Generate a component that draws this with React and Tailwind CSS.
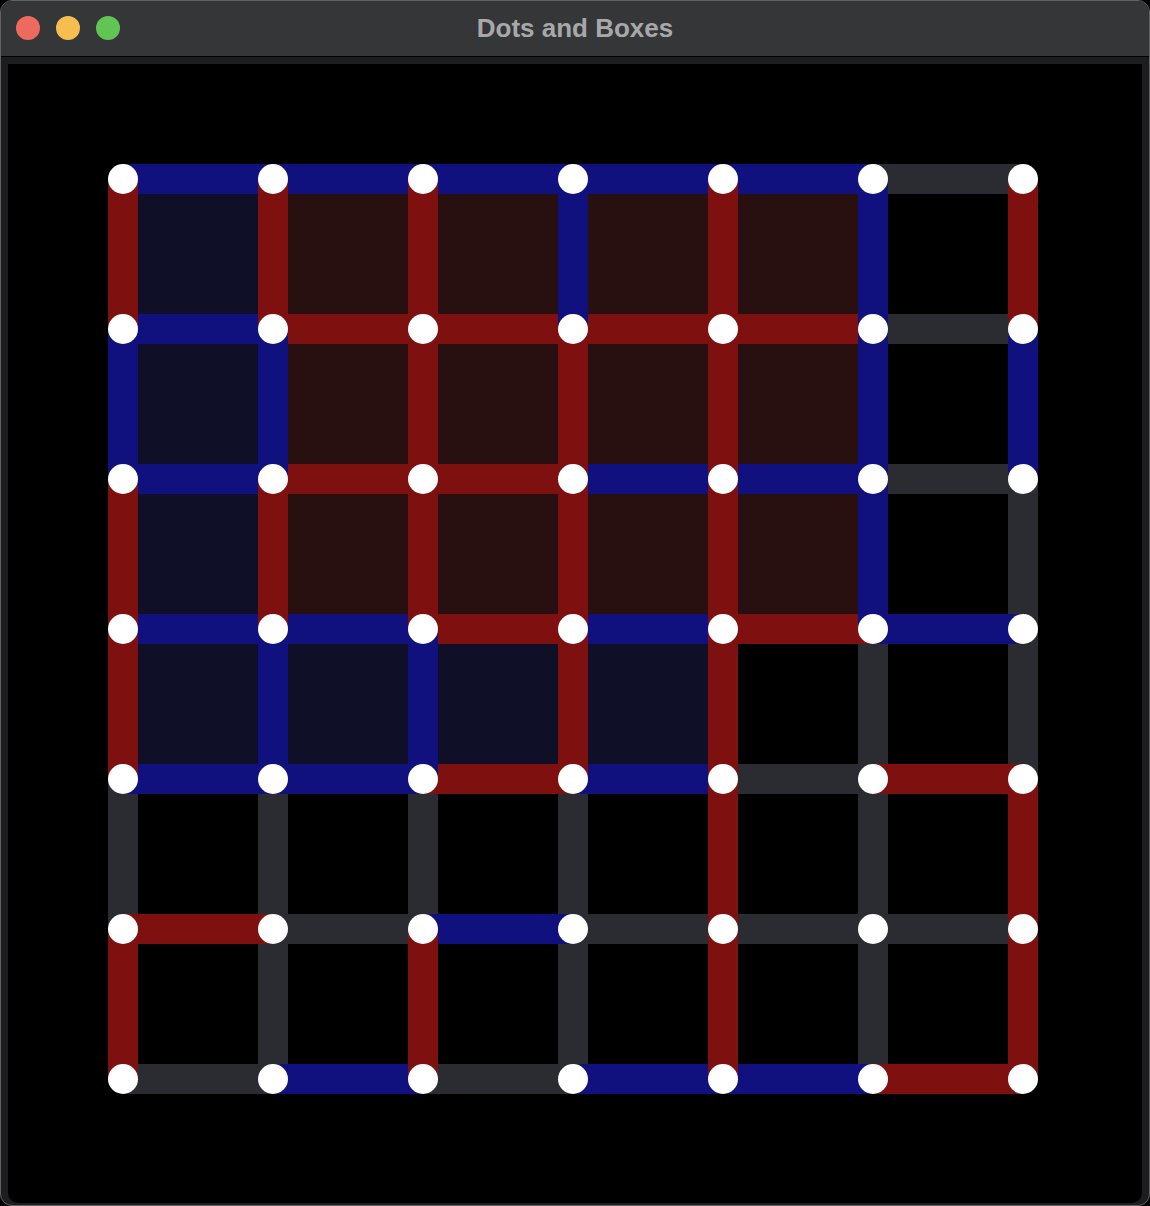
const BLUE = "#10107f";
const RED = "#7f1010";
const GRAY = "#2b2c31";
const BOX_BLUE = "#0f1027";
const BOX_RED = "#291010";

const C = { b: BLUE, r: RED, g: GRAY };

// rows of horizontal segments (7 rows x 6 segments)
const hLines = [
  "bbbbbg",
  "brrrrg",
  "brrbbg",
  "bbrbrb",
  "bbrbgr",
  "rgbggg",
  "gbgbbr",
];

// columns of vertical segments (7 columns x 6 segments)
const vLines = [
  "rbrrgr",
  "rbrbgg",
  "rrrbgr",
  "brrrgg",
  "rrrrrr",
  "bbbggg",
  "rbggrr",
];

// boxes, 6 rows x 6 cols ("." = empty)
const boxes = [
  "brrrr.",
  "brrrr.",
  "brrrr.",
  "bbbb..",
  "......",
  "......",
];

const STEP = 150;
const OFF = 15;
const W = 30;

function Board() {
  const pos = (i) => OFF + i * STEP;
  const all = [];
  hLines.forEach((row, j) =>
    row.split("").forEach((c, i) => all.push({ k: `h${j}${i}`, c, x: pos(i), y: pos(j) - W / 2, w: STEP, h: W }))
  );
  vLines.forEach((col, i) =>
    col.split("").forEach((c, j) => all.push({ k: `v${i}${j}`, c, x: pos(i) - W / 2, y: pos(j), w: W, h: STEP }))
  );
  const grayFirst = [...all.filter((l) => l.c === "g"), ...all.filter((l) => l.c !== "g")];

  return (
    <svg width="930" height="930" viewBox="0 0 930 930" className="block">
      {boxes.map((row, j) =>
        row.split("").map((c, i) =>
          c === "." ? null : (
            <rect key={`b${j}${i}`} x={pos(i)} y={pos(j)} width={STEP} height={STEP} fill={c === "b" ? BOX_BLUE : BOX_RED} />
          )
        )
      )}
      {grayFirst.map((l) => (
        <rect key={l.k} x={l.x} y={l.y} width={l.w} height={l.h} fill={C[l.c]} />
      ))}
      {Array.from({ length: 7 }).map((_, j) =>
        Array.from({ length: 7 }).map((_, i) => (
          <circle key={`d${j}${i}`} cx={pos(i)} cy={pos(j)} r="15" fill="#ffffff" />
        ))
      )}
    </svg>
  );
}

export default function App() {
  return (
    <div className="w-[1150px] h-[1206px] bg-black">
      <div className="h-full flex flex-col rounded-[12px] border border-[#626264] bg-[#1d1d1f] overflow-hidden">
        <div className="relative h-[56px] shrink-0 bg-[#353638] border-b border-black flex items-center justify-center">
          <div className="absolute left-[15px] top-[15px] flex gap-[16px]">
            <span className="w-[24px] h-[24px] rounded-full bg-[#ee6a5f]" />
            <span className="w-[24px] h-[24px] rounded-full bg-[#f5be4f]" />
            <span className="w-[24px] h-[24px] rounded-full bg-[#61c554]" />
          </div>
          <span className="text-[26px] font-bold text-[#a8a8aa] leading-none -mt-[2px]" style={{ fontFamily: '"Liberation Sans", Arial, sans-serif' }}>
            Dots and Boxes
          </span>
        </div>
        <div className="flex-1 px-[7px] pt-[7px] pb-[2px]">
          <div className="h-full bg-black rounded-b-[10px] pl-[100px] pt-[100px]">
            <Board />
          </div>
        </div>
      </div>
    </div>
  );
}
